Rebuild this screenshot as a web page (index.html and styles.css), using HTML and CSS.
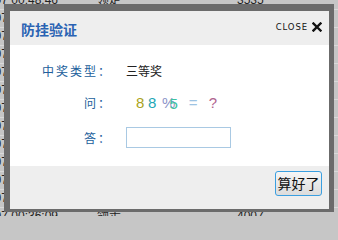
FILE: index.html
```html
<!DOCTYPE html>
<html lang="zh-CN">
<head>
<meta charset="utf-8">
<title>防挂验证</title>
<link rel="stylesheet" href="styles.css">
</head>
<body>
<div class="page">
<div class="table">
  <div class="row"><span class="c1">2017-07-07 00:48:46</span><span class="c2">领走</span><span class="c3">3535</span></div>
  <div class="row"><span class="c1">2017-07-07 00:47:12</span><span class="c2">领走</span><span class="c3">3120</span></div>
  <div class="row"><span class="c1">2017-07-07 00:46:30</span><span class="c2">领走</span><span class="c3">2980</span></div>
  <div class="row"><span class="c1">2017-07-07 00:45:51</span><span class="c2">领走</span><span class="c3">3301</span></div>
  <div class="row"><span class="c1">2017-07-07 00:44:07</span><span class="c2">领走</span><span class="c3">4120</span></div>
  <div class="row"><span class="c1">2017-07-07 00:43:22</span><span class="c2">领走</span><span class="c3">3877</span></div>
  <div class="row"><span class="c1">2017-07-07 00:42:40</span><span class="c2">领走</span><span class="c3">2765</span></div>
  <div class="row"><span class="c1">2017-07-07 00:41:15</span><span class="c2">领走</span><span class="c3">3599</span></div>
  <div class="row"><span class="c1">2017-07-07 00:40:03</span><span class="c2">领走</span><span class="c3">3012</span></div>
  <div class="row"><span class="c1">2017-07-07 00:39:28</span><span class="c2">领走</span><span class="c3">4433</span></div>
  <div class="row"><span class="c1">2017-07-07 00:38:44</span><span class="c2">领走</span><span class="c3">3260</span></div>
  <div class="row"><span class="c1">2017-07-07 00:37:19</span><span class="c2">领走</span><span class="c3">3788</span></div>
  <div class="row"><span class="c1">2017-07-07 00:36:09</span><span class="c2">领走</span><span class="c3">4007</span></div>
</div>

<div class="modal">
  <div class="modal-head">
    <h1 class="modal-title">防挂验证</h1>
    <a class="close">CLOSE<svg class="close-x" width="10" height="10" viewBox="0 0 10 10"><path d="M1.5 1.5 L8.5 8.5 M8.5 1.5 L1.5 8.5" stroke="#111" stroke-width="2.4" stroke-linecap="square" fill="none"/></svg></a>
  </div>
  <div class="modal-body">
    <div class="label">中奖类型：</div>
    <div class="value">三等奖</div>
    <div class="label">问：</div>
    <div class="value captcha"><span class="q q1">8</span><span class="q q2">8</span><span class="q q3">%</span><span class="q q4">5</span><span class="q q5">=</span><span class="q q6">?</span></div>
    <div class="label">答：</div>
    <div class="value"><input class="answer" type="text"></div>
  </div>
  <div class="modal-foot">
    <button class="btn">算好了</button>
  </div>
</div>
</div>
</body>
</html>
```

FILE: styles.css
```css
html, body {
  margin: 0;
  padding: 0;
  overflow: hidden;
}
body {
  background: #c6c6c6;
  font-family: "Liberation Sans", "Noto Sans CJK SC", sans-serif;
}
.page {
  position: relative;
  width: 338px;
  height: 216px;
  overflow: hidden;
  background: #c6c6c6;
}
.table {
  margin-top: -8px;
  margin-left: -60px;
}
.row {
  display: grid;
  grid-template-columns: 118px 100px 1fr;
  height: 18px;
  line-height: 17px;
  border-bottom: 1px solid #dadada;
  box-sizing: border-box;
  font-size: 12px;
  color: #222;
  white-space: nowrap;
}
.c1 { text-align: right; }
.c2 { padding-left: 39px; }
.c3 { padding-left: 79px; }

.modal {
  position: absolute;
  left: 4px;
  top: 4px;
  width: 330px;
  height: 208px;
  box-sizing: border-box;
  border-style: solid;
  border-color: #6b6b6b;
  border-width: 7px 5px 3px 6px;
  background: #fff;
  display: flex;
  flex-direction: column;
}
.modal-head {
  height: 34px;
  background: #eeeeee;
  display: flex;
  align-items: center;
  justify-content: space-between;
  padding: 0 7px 0 11px;
}
.modal-title {
  margin: 0;
  font-family: "Noto Sans CJK SC", sans-serif;
  font-size: 14px;
  font-weight: bold;
  color: #2a63b3;
  line-height: 16px;
  margin-top: 1px;
}
.close {
  display: flex;
  align-items: center;
  font-family: "DejaVu Sans", sans-serif;
  font-size: 8.5px;
  letter-spacing: 0.9px;
  color: #111;
  margin-bottom: 3px;
}
.close-x {
  margin-left: 4px;
}
.modal-body {
  height: 121px;
  box-sizing: border-box;
  padding-top: 9px;
  display: grid;
  grid-template-columns: 102px 1fr;
  grid-template-rows: 32px 32px 38px;
  column-gap: 14px;
  align-items: center;
  font-family: "Noto Sans CJK SC", sans-serif;
  font-size: 12px;
}
.label {
  text-align: right;
  letter-spacing: 2px;
  color: #215e9b;
}
.value {
  color: #222;
}
.captcha {
  display: flex;
  align-items: center;
  font-family: "Liberation Sans", sans-serif;
  font-size: 15px;
  padding-left: 10px;
}
.q1 { color: #aaa321; }
.q2 { color: #22a7b6; margin-left: 3.7px; }
.q3 { color: #8a92c8; margin-left: 5.7px; }
.q4 { color: #3fc2a2; margin-left: -6px; margin-top: 2px; }
.q5 { color: #9ec3e3; margin-left: 11px; }
.q6 { color: #b0648f; margin-left: 11.2px; }
.answer {
  display: block;
  width: 105px;
  height: 21px;
  box-sizing: border-box;
  margin: 0;
  border: 1px solid #a9c9e3;
  background: #fff;
  padding: 0 3px;
  outline: none;
}
.modal-foot {
  flex: 1;
  background: #eeeeee;
  display: flex;
  justify-content: flex-end;
  align-items: flex-start;
  padding: 5px 7px 0 0;
}
.btn {
  width: 47px;
  height: 25px;
  box-sizing: border-box;
  padding: 0;
  border: 1px solid #3a9fe0;
  border-radius: 3px;
  background: linear-gradient(#f6f6f6, #dcdcdc);
  font-family: "Noto Sans CJK SC", sans-serif;
  font-size: 14px;
  color: #111;
  line-height: 21px;
}
```
